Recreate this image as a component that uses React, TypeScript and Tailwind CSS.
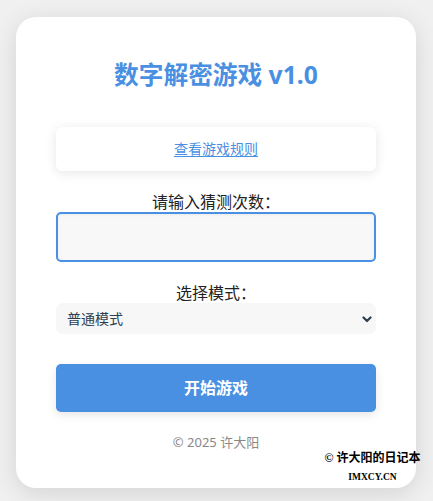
import { useState } from 'react'

const FONT = { fontFamily: '"Noto Sans", "Noto Sans CJK SC", sans-serif' }

export default function App() {
  const [count, setCount] = useState('')
  const [mode, setMode] = useState('normal')

  return (
    <div className="relative min-h-screen bg-[#f0f0f0] pt-[17px] pb-[20px]" style={FONT}>
      <div className="ml-[16px] w-[400px] rounded-[20px] bg-white px-10 pt-10 pb-[37px] shadow-[0_5px_25px_rgba(0,0,0,0.12)]">
        <h1 className="text-center text-[24.7px] leading-[36px] font-bold text-[#4a90e2]">数字解密游戏 v1.0</h1>

        <div className="mt-[34px] flex h-[44px] items-center justify-center rounded-[6px] bg-white shadow-[0_2px_12px_rgba(0,0,0,0.1)]">
          <a href="#" className="text-[14px] leading-[20px] text-[#4a90e2] underline underline-offset-2">查看游戏规则</a>
        </div>

        <label className="mt-[22px] block text-center text-[16px] leading-[19px] text-[#222]">请输入猜测次数：</label>
        <input
          type="number"
          value={count}
          onChange={e => setCount(e.target.value)}
          className="block h-[50px] w-full rounded-[5px] border-2 border-[#4a90e2] bg-[#f8f8f8] px-3 text-[16px] outline-none shadow-[inset_0_1px_3px_rgba(0,0,0,0.06)]"
        />

        <label className="mt-[22px] block text-center text-[16px] leading-[19px] text-[#222]">选择模式：</label>
        <div className="relative">
          <select
            value={mode}
            onChange={e => setMode(e.target.value)}
            className="block h-[31px] w-full appearance-none rounded-[7px] bg-[#f7f7f8] pl-[11px] text-[14px] text-[#2c3e50] outline-none"
          >
            <option value="normal">普通模式</option>
            <option value="hard">困难模式</option>
          </select>
          <svg className="pointer-events-none absolute right-[4px] top-[13px]" width="10" height="7" viewBox="0 0 10 7">
            <path d="M1.5 1.5L5 5l3.5-3.5" fill="none" stroke="#2c3e50" strokeWidth="2.2" strokeLinecap="round" strokeLinejoin="round" />
          </svg>
        </div>

        <button className="mt-[30px] block h-[48px] w-full rounded-[5px] bg-[#4a90e2] text-[16px] font-bold text-white shadow-[0_3px_10px_rgba(0,0,0,0.1)]">
          开始游戏
        </button>

        <p className="mt-[21px] text-center text-[13px] leading-[18px] text-[#888]">© 2025 许大阳</p>
      </div>

      <div className="absolute left-[322px] top-[449px] w-[101px] text-center text-black" style={{ fontFamily: '"Liberation Serif", "Noto Sans CJK SC", serif' }}>
        <div className="text-[12px] leading-[18px] font-bold">© 许大阳的日记本</div>
        <div className="text-[9.5px] leading-[20px] font-bold">IMXCY.CN</div>
      </div>
    </div>
  )
}
